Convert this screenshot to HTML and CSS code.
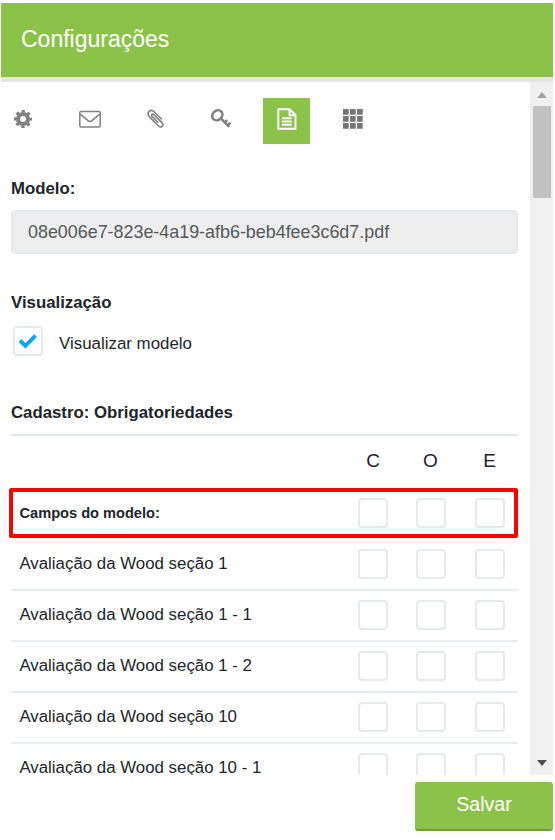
FILE: index.html
```html
<!DOCTYPE html>
<html lang="pt-BR">
<head>
<meta charset="utf-8">
<title>Configurações</title>
<link rel="stylesheet" href="styles.css">
</head>
<body>
<div class="dialog">
  <header class="header"><h1>Configurações</h1></header>
  <div class="body">
    <main class="content">
      <nav class="tabs">
        <span class="tab"><svg width="18" height="18" viewBox="0 0 18 18"><g fill="none" stroke="#808080"><circle cx="9" cy="9" r="5" stroke-width="4.2"/><circle cx="9" cy="9" r="7.9" stroke-width="2.3" stroke-dasharray="3.3 2.904" stroke-dashoffset="1.65"/></g></svg></span>
        <span class="tab mail"><svg width="22" height="18" viewBox="0 0 22 18"><g fill="none" stroke="#808080" stroke-width="1.5" stroke-linejoin="round"><rect x=".8" y="1.4" width="20.4" height="15.6" rx="1.2"/><path d="M1.200 4.200 9 10.700Q11 12.300 13 10.700L20.800 4.200"/></g></svg></span>
        <span class="tab clip"><svg width="18" height="20" viewBox="0 0 18 20"><path d="M10.800 13.300 5.100 7.500C3.600 6 5.200 4.200 6.800 5.700L14.600 13.400C17.600 16.500 14.300 19.800 11.300 16.800L2.400 7.900C-1.400 4.100 3.600-.8 7.400 3L14.500 10" fill="none" stroke="#808080" stroke-width="1.600" stroke-linecap="round"/></svg></span>
        <span class="tab"><svg width="20" height="20" viewBox="0 0 20 20"><g fill="none" stroke="#808080"><ellipse cx="6.300" cy="6.300" rx="5.500" ry="4.600" transform="rotate(-42 6.300 6.300)" stroke-width="2.500"/><path d="m9.800 9.300 8.500 8.500M13.600 13.700l2.600-2.500M16.400 16.500l3-2.900" stroke-width="2.500"/></g></svg></span>
        <span class="tab active"><svg width="20" height="22" viewBox="0 0 20 22"><g fill="none" stroke="#fff" stroke-width="1.900"><path d="M1.300 1.300H12.800L18.500 7V20.700H1.300ZM12.500 1.500V7.300H18.500" stroke-linejoin="round"/><path d="M5 10.200h9.700M5 13.500h9.700M5 16.800h9.700"/></g></svg></span>
        <span class="tab"><svg width="20" height="20" viewBox="0 0 20 20" fill="#777"><path d="M0 0h5.700v5.700H0zM7 0h5.700v5.700H7zM14 0h5.700v5.700H14zM0 7h5.700v5.700H0zM7 7h5.700v5.700H7zM14 7h5.700v5.700H14zM0 14h5.700v5.700H0zM7 14h5.700v5.700H7zM14 14h5.700v5.700H14z"/></svg></span>
      </nav>
      <h2 class="label">Modelo:</h2>
      <div class="field"><span>08e006e7-823e-4a19-afb6-beb4fee3c6d7.pdf</span></div>
      <h2 class="label view">Visualização</h2>
      <div class="option"><i class="box"><svg width="20" height="16" viewBox="0 0 20 16"><path d="M2 7.500 7.400 12.800 17.500 2.700" fill="none" stroke="#03a9f4" stroke-width="4"/></svg></i><span class="option-text">Visualizar modelo</span></div>
      <h2 class="label section">Cadastro: Obrigatoriedades</h2>
      <div class="row head"><span></span><b>C</b><b>O</b><b>E</b></div>
      <div class="row marked"><span class="strong">Campos do modelo:</span><i class="box"></i><i class="box"></i><i class="box"></i></div>
      <div class="row"><span>Avaliação da Wood seção 1</span><i class="box"></i><i class="box"></i><i class="box"></i></div>
      <div class="row"><span>Avaliação da Wood seção 1 - 1</span><i class="box"></i><i class="box"></i><i class="box"></i></div>
      <div class="row"><span>Avaliação da Wood seção 1 - 2</span><i class="box"></i><i class="box"></i><i class="box"></i></div>
      <div class="row"><span>Avaliação da Wood seção 10</span><i class="box"></i><i class="box"></i><i class="box"></i></div>
      <div class="row"><span>Avaliação da Wood seção 10 - 1</span><i class="box"></i><i class="box"></i><i class="box"></i></div>
    </main>
    <div class="scrollbar">
      <svg width="10" height="6" viewBox="0 0 10 6"><path d="M0 6 5 0l5 6z" fill="#a3a3a3"/></svg>
      <div class="thumb"></div>
      <svg class="down" width="10" height="6" viewBox="0 0 10 6"><path d="M0 0h10L5 6z" fill="#505050"/></svg>
    </div>
  </div>
  <footer class="footer"><button class="save">Salvar</button></footer>
</div>
</body>
</html>
```
FILE: styles.css
```css
* { box-sizing: border-box; }
body {
  margin: 0;
  background: #fff;
  color: #212529;
  font-family: "Liberation Sans", Arial, sans-serif;
  font-size: 16.9px;
}
svg { display: block; }
.dialog {
  width: 552px;
  margin-left: 1px;
  padding-top: 3px;
}
.header {
  height: 79px;
  padding: 0 20px;
  background: #8bc34a;
  border-bottom: 5px solid #e5e5e5;
}
.header h1 {
  margin: 0;
  color: #fff;
  font-size: 23px;
  font-weight: 400;
  line-height: 72px;
}
.body {
  display: flex;
  height: 693px;
  overflow: hidden;
}
.content {
  flex: 1;
  padding: 16px 12px 0 10px;
}
.tabs {
  display: flex;
  gap: 19px;
  height: 46px;
  margin-left: -12px;
}
.tab {
  display: flex;
  align-items: center;
  justify-content: center;
  width: 47px;
  height: 46px;
  padding-bottom: 5px;
}
.tab:nth-child(-n+4) { padding-bottom: 4px; }
.tab.mail { padding-left: 2px; }
.tab.clip { padding-left: 2px; }
.tab.active { background: #8bc34a; padding-bottom: 4px; }
.label {
  height: 24px;
  margin: 32px 0 0;
  font-size: 16.8px;
  font-weight: 700;
  line-height: 25px;
}
.field {
  height: 44px;
  margin-top: 10px;
  padding-left: 15px;
  background: #eee;
  border: 2px solid #e6eaed;
  border-radius: 4px;
  color: #55595c;
  font-size: 17.9px;
  line-height: 40px;
}
.label.view { margin-top: 36px; line-height: 26px; }
.option {
  display: flex;
  align-items: center;
  height: 30px;
  margin: 12px 0 0 2px;
}
.option-text { margin: 5px 0 0 16px; }
.box {
  display: flex;
  align-items: center;
  justify-content: center;
  width: 30px;
  height: 30px;
  border: 2px solid #e6eaed;
  border-radius: 4px;
}
.label.section {
  height: 36px;
  margin-top: 44px;
  border-bottom: 2px solid #e3e8ee;
  line-height: 26px;
}
.row {
  display: grid;
  grid-template-columns: 1fr 54px 61px 57px;
  align-items: center;
  justify-items: center;
  height: 51px;
  padding-bottom: 1px;
  border-bottom: 2px solid #e9edf0;
}
.row > span {
  justify-self: start;
  padding-left: 8.4px;
  font-size: 16.85px;
}
.row.head {
  height: 52px;
  padding: 0 0 2px;
  border: 0;
}
.row b {
  font-size: 19px;
  font-weight: 400;
}
.row.marked {
  grid-template-columns: 1fr 54px 61px 53px;
  height: 50px;
  margin: 0 0 2px -2px;
  border: 4px solid #f00;
  border-radius: 2px;
  padding: 0;
}
.row.marked .box:last-child { margin-left: 4px; }
.row .strong {
  padding-left: 6.5px;
  font-size: 14.6px;
  font-weight: 700;
}
.scrollbar {
  display: flex;
  flex-direction: column;
  align-items: center;
  width: 23px;
  padding: 10px 0 9px;
  background: #f0f0f0;
}
.thumb {
  width: 18px;
  height: 92px;
  margin-top: 8px;
  background: #c1c1c1;
}
.down { margin-top: auto; }
.footer {
  display: flex;
  justify-content: flex-end;
  padding-top: 7px;
}
.save {
  width: 138px;
  height: 49px;
  padding: 0 0 2px;
  border: 0;
  border-bottom: 2px solid #689f38;
  border-radius: 3px;
  background: #8bc34a;
  color: #fff;
  font: 19.6px "Liberation Sans", Arial, sans-serif;
}
```
